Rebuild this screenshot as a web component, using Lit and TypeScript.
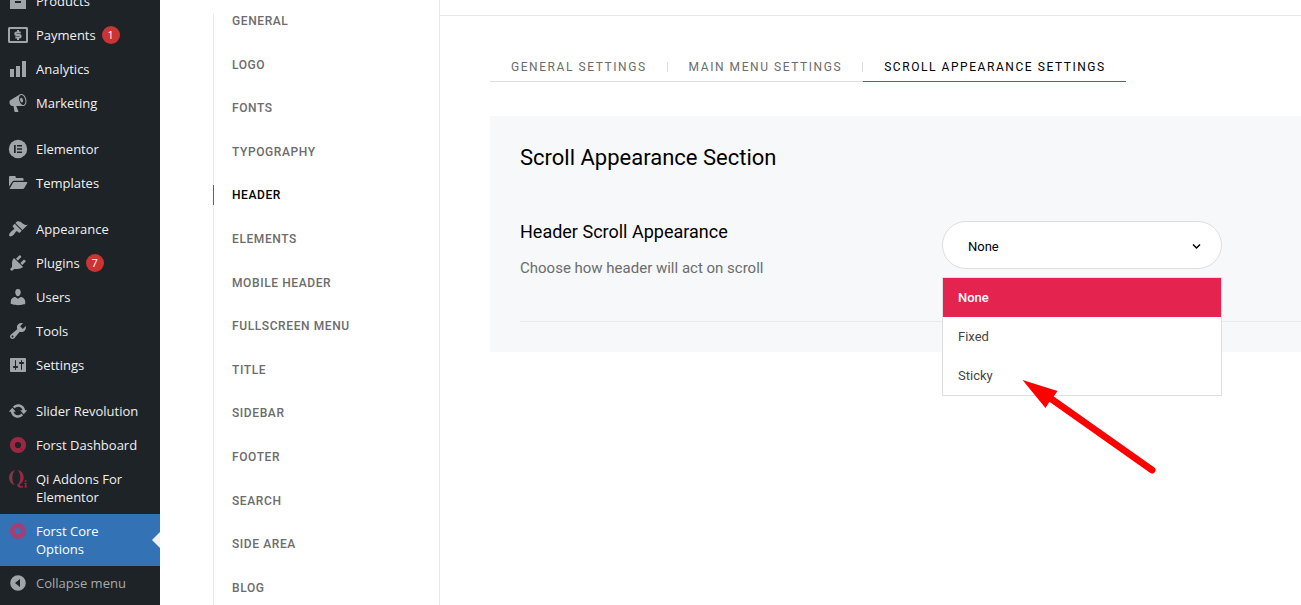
import { LitElement, html, css, svg, nothing } from "lit";
import { customElement, property, state } from "lit/decorators.js";
import { classMap } from "lit/directives/class-map.js";

const icons: Record<string, unknown> = {
  products: svg`<path fill-rule="evenodd" d="M2 4h16v4H2zM2 8h16v10H2zM7 10v2h6v-2z"/>`,
  payments: svg`<path fill-rule="evenodd" d="M1.500 2h17C19.300 2 20 2.700 20 3.500v13c0 .8-.7 1.500-1.500 1.500h-17C.7 18 0 17.300 0 16.500v-13C0 2.700.7 2 1.500 2zM2 4v12h16V4z"/><path fill="none" stroke="currentColor" stroke-width="2" d="M12.700 7.500H8.600c-.8 0-1.300.5-1.300 1.200S7.800 10 8.600 10h2.800c.8 0 1.300.6 1.300 1.300s-.5 1.200-1.300 1.200H7.300M10 5v2.300M10 12.600v2.400"/>`,
  analytics: svg`<path d="M18 18V2h-4v16h4zm-6 0V7H8v11h4zM2 18h4v-8H2v8z"/>`,
  marketing: svg`<path d="M18.15 5.94c.46 1.62.38 3.22-.02 4.48-.42 1.28-1.26 2.18-2.3 2.48-.16.06-.26.06-.4.06-.06.02-.12.02-.18.02-.06.02-.14.02-.22.02h-6.8l2.22 5.5c.02.14-.06.26-.14.34-.08.1-.24.16-.34.16H6.95c-.1 0-.26-.06-.34-.16-.08-.08-.16-.2-.14-.34l-1-5.5H4.25l-.02-.02c-.5.06-1.08-.18-1.54-.62s-.88-1.08-1.06-1.88c-.24-.8-.2-1.56-.02-2.2.18-.62.58-1.08 1.06-1.3l.02-.02 9-5.4c.1-.06.18-.1.24-.16.06-.04.14-.08.24-.12.16-.08.28-.12.5-.18 1.04-.3 2.24.1 3.22.98s1.84 2.24 2.26 3.86zm-2.58 5.98h-.02c.4-.1.74-.34 1.04-.7.58-.7.86-1.76.86-3.04 0-.64-.1-1.3-.28-1.98-.34-1.36-1.02-2.5-1.78-3.24s-1.68-1.1-2.46-.88c-.82.22-1.4.96-1.7 2-.32 1.04-.28 2.36.06 3.72.38 1.36 1 2.5 1.8 3.24.78.74 1.62 1.1 2.48.88zm-2.54-7.08c.22-.04.42-.02.62.04.38.16.76.48 1.02 1s.42 1.2.42 1.78c0 .3-.04.56-.12.8-.18.48-.44.84-.86.94-.34.1-.8-.06-1.14-.4s-.64-.86-.78-1.5c-.18-.62-.12-1.24.02-1.72s.48-.84.82-.94z"/>`,
  elementor: svg`<circle cx="10" cy="10" r="9.200"/><path fill="#1d2327" d="M6 6h1.700v8H6zM9 6h5v1.600H9zM9 9.200h5v1.600H9zM9 12.400h5V14H9z"/>`,
  templates: svg`<path d="M1 13.500V4.300C1 3.500 1.600 3 2.300 3h4.200c.7 0 1.300.5 1.300 1.300V5h6.500c.7 0 1.200.5 1.200 1.200v1.600H6.300c-.9 0-1.700.4-2.200 1.200z"/><path d="M1.500 16l3.300-6c.3-.6.900-.9 1.500-.9h12.400c.5 0 .7.4.5.8l-2.900 5.200c-.3.600-.9.900-1.500.9z"/>`,
  appearance: svg`<path d="M14.48 11.06L7.41 3.99l1.5-1.5c.5-.56 2.3-.47 3.51.32 1.21.8 1.43 1.28 2.91 2.1 1.18.64 2.45 1.26 4.45.85zm-.71.71L6.7 4.7 4.93 6.47c-.39.39-.39 1.02 0 1.41l1.06 1.06c.39.39.39 1.03 0 1.42-.6.6-1.43 1.11-2.21 1.69-.35.26-.7.53-1.01.84C1.43 14.23.4 16.08 1.4 17.07c.99 1 2.84-.03 4.18-1.36.31-.31.58-.66.85-1.02.57-.78 1.08-1.61 1.69-2.21.39-.39 1.02-.39 1.41 0l1.06 1.06c.39.39 1.02.39 1.41 0z"/>`,
  plugins: svg`<path d="M13.11 4.36L9.87 7.6 8 5.73l3.24-3.24c.35-.34 1.05-.2 1.56.32.52.51.66 1.21.31 1.55zm-8 1.77l.91-1.12 9.01 9.01-1.19.84c-.71.71-2.63 1.16-3.82 1.16H6.14L4.9 17.26c-.59.59-1.54.59-2.12 0-.59-.58-.59-1.53 0-2.12l1.24-1.24v-3.88c0-1.13.4-3.19 1.09-3.89zm7.26 3.97l3.24-3.24c.34-.35 1.04-.21 1.55.31.52.51.66 1.21.31 1.55l-3.24 3.25z"/>`,
  users: svg`<path d="M10 9.25c-2.27 0-2.73-3.44-2.73-3.44C7 4.02 7.82 2 9.97 2c2.16 0 2.98 2.02 2.71 3.81 0 0-.41 3.44-2.68 3.44zm0 2.57L12.72 10c2.39 0 4.52 2.33 4.52 4.53v2.49s-3.65 1.13-7.24 1.13c-3.65 0-7.24-1.13-7.24-1.13v-2.49c0-2.25 1.94-4.48 4.47-4.48z"/>`,
  tools: svg`<path d="M16.68 9.77c-1.34 1.34-3.3 1.67-4.95.99l-5.41 6.52c-.99.99-2.59.99-3.58 0s-.99-2.59 0-3.57l6.52-5.42c-.68-1.65-.35-3.61.99-4.95 1.28-1.28 3.12-1.62 4.72-1.06l-2.89 2.89 2.82 2.82 2.86-2.87c.53 1.58.18 3.39-1.08 4.65zM3.81 16.21c.4.39 1.04.39 1.43 0 .4-.4.4-1.04 0-1.43-.39-.4-1.03-.4-1.43 0-.39.39-.39 1.03 0 1.43z"/>`,
  settings: svg`<path d="M18 16V4c0-.55-.45-1-1-1H3c-.55 0-1 .45-1 1v12c0 .55.45 1 1 1h14c.55 0 1-.45 1-1zM8 11h1c.55 0 1 .45 1 1s-.45 1-1 1H8v1.5c0 .28-.22.5-.5.5s-.5-.22-.5-.5V13H6c-.55 0-1-.45-1-1s.45-1 1-1h1V5.5c0-.28.22-.5.5-.5s.5.22.5.5V11zm5-2h-1c-.55 0-1-.45-1-1s.45-1 1-1h1V5.5c0-.28.22-.5.5-.5s.5.22.5.5V7h1c.55 0 1 .45 1 1s-.45 1-1 1h-1v5.5c0 .28-.22.5-.5.5s-.5-.22-.5-.5V9z"/>`,
  update: svg`<path d="M10.2 3.28c3.53 0 6.43 2.61 6.92 6h2.08l-3.5 4-3.5-4h2.32c-.45-1.97-2.21-3.45-4.32-3.45-1.45 0-2.73.71-3.54 1.78L4.95 5.66C6.23 4.2 8.11 3.28 10.2 3.28zm-.4 13.44c-3.52 0-6.43-2.61-6.92-6H.8l3.5-4c1.17 1.33 2.33 2.67 3.5 4H5.48c.45 1.97 2.21 3.45 4.32 3.45 1.45 0 2.73-.71 3.54-1.78l1.71 1.95c-1.28 1.46-3.15 2.38-5.25 2.38z"/>`,
  forst: svg`<circle cx="10" cy="10" r="5.600" fill="none" stroke="#9b2743" stroke-width="5"/><path d="M12.300 12.400l1.800 2.600" stroke="#6d2036" stroke-width="1"/>`,
  forstActive: svg`<circle cx="10" cy="10" r="5.600" fill="none" stroke="#a23f74" stroke-width="5"/><path d="M12.300 12.400l1.800 2.600" stroke="#7a4a88" stroke-width="1"/>`,
  qi: svg`<path fill="#80384b" d="M7.200 1.200C3.500 1.800 1.100 4.700 1.100 8.500s2.300 6.800 5.600 7.500C5 14.500 4.400 12 4.400 8.600c0-3.300.9-5.900 2.800-7.400z"/><path fill="#9b2743" d="M9.300 1.100c3.800.4 6.400 3.400 6.400 7.400 0 3.200-1.500 5.800-4.200 7 .9 1.400 2 2 3.700 1.800v1.200c-3 .8-5.200 0-6.300-2.600 2.300-1.200 3.400-3.600 3.400-7.300 0-3.500-1-6-3-7.500zM16.800 11.300h1.700V13h-1.700zM16.300 14h2.200v3.600h.7v.9h-2.900v-.9h.6v-2.700h-.6z"/>`,
  collapse: svg`<path fill-rule="evenodd" d="M10 2.200a7.800 7.800 0 1 1 0 15.600 7.800 7.800 0 0 1 0-15.600zM12 6l-5 4 5 4z"/>`,
};

interface MenuEntry {
  label: string;
  icon: string;
  badge?: number;
  current?: boolean;
}

const menuGroups: MenuEntry[][] = [
  [
    { label: "Products", icon: "products" },
    { label: "Payments", icon: "payments", badge: 1 },
    { label: "Analytics", icon: "analytics" },
    { label: "Marketing", icon: "marketing" },
  ],
  [
    { label: "Elementor", icon: "elementor" },
    { label: "Templates", icon: "templates" },
  ],
  [
    { label: "Appearance", icon: "appearance" },
    { label: "Plugins", icon: "plugins", badge: 7 },
    { label: "Users", icon: "users" },
    { label: "Tools", icon: "tools" },
    { label: "Settings", icon: "settings" },
  ],
  [
    { label: "Slider Revolution", icon: "update" },
    { label: "Forst Dashboard", icon: "forst" },
    { label: "Qi Addons For Elementor", icon: "qi" },
    { label: "Forst Core Options", icon: "forstActive", current: true },
  ],
];

@customElement("admin-menu")
export class AdminMenu extends LitElement {
  static styles = css`
    :host {
      display: block;
      overflow: hidden;
      background: #1d2327;
      color: #f0f0f1;
      font: 13px/18px "Open Sans", "Noto Sans", sans-serif;
    }
    .menu {
      display: flex;
      flex-direction: column;
      gap: 12px;
      margin-top: -16px;
    }
    .group {
      margin: 0;
      padding: 0;
      list-style: none;
    }
    .entry {
      position: relative;
      box-sizing: border-box;
      display: flex;
      gap: 8px;
      width: 100%;
      padding: 8px 12px 8px 8px;
      border: 0;
      background: none;
      color: inherit;
      font: inherit;
      text-align: left;
      text-decoration: none;
    }
    .current {
      background: #3373b5;
      color: #fff;
    }
    .current::after {
      content: "";
      position: absolute;
      top: 50%;
      right: 0;
      margin-top: -8px;
      border: 8px solid transparent;
      border-left-width: 0;
      border-right-color: #f0f0f1;
    }
    .icon {
      flex: none;
      width: 20px;
      height: 20px;
      margin: -1px 0;
      fill: currentColor;
      color: #a0a5aa;
    }
    .label {
      display: flex;
      gap: 6px;
    }
    .badge {
      width: 18px;
      height: 18px;
      border-radius: 9px;
      background: #cc3333;
      color: #fff;
      font-size: 11px;
      text-align: center;
    }
    .collapse {
      color: #a7aaad;
    }
  `;

  private icon(name: string) {
    return html`<svg class="icon" viewBox="0 0 20 20" aria-hidden="true">${icons[name]}</svg>`;
  }

  render() {
    return html`
      <nav class="menu" aria-label="Main menu">
        ${menuGroups.map(
          (group, i) => html`
            <ul class="group">
              ${group.map(
                (e) => html`<li>
                  <a class=${classMap({ entry: true, current: !!e.current })} href="#">
                    ${this.icon(e.icon)}
                    <span class="label">${e.label}${e.badge ? html`<span class="badge">${e.badge}</span>` : nothing}</span>
                  </a>
                </li>`
              )}
              ${i === menuGroups.length - 1
                ? html`<li><button class="entry collapse" type="button">${this.icon("collapse")}<span class="label">Collapse menu</span></button></li>`
                : nothing}
            </ul>
          `
        )}
      </nav>
    `;
  }
}

const sections = [
  "General", "Logo", "Fonts", "Typography", "Header", "Elements", "Mobile Header",
  "Fullscreen Menu", "Title", "Sidebar", "Footer", "Search", "Side Area", "Blog",
];

@customElement("options-nav")
export class OptionsNav extends LitElement {
  @property() current = "Header";

  static styles = css`
    :host {
      box-sizing: border-box;
      display: flex;
      padding: 14px 0 0 53px;
      border-right: 1px solid #e8e8e8;
      font: 500 12px/14px Roboto, sans-serif;
    }
    nav {
      display: flex;
      flex: 1;
    }
    .list {
      flex: 1;
      display: flex;
      flex-direction: column;
      justify-content: space-between;
      margin: 0;
      padding: 0 0 10px 18px;
      border-left: 1px solid #e8e8e8;
      list-style: none;
    }
    .item {
      position: relative;
      display: flex;
    }
    .link {
      color: #6c6c6c;
      letter-spacing: 0.05em;
      text-transform: uppercase;
      text-decoration: none;
    }
    .active .link {
      color: #000;
    }
    .active::before {
      content: "";
      position: absolute;
      inset: -3px auto -3px -19px;
      width: 1px;
      background: #e22450;
    }
  `;

  render() {
    return html`<nav aria-label="Option sections">
      <ul class="list">
        ${sections.map(
          (s) => html`<li class=${classMap({ item: true, active: s === this.current })}><a class="link" href="#">${s}</a></li>`
        )}
      </ul>
    </nav>`;
  }
}

const choices = ["None", "Fixed", "Sticky"];

@customElement("choice-field")
export class ChoiceField extends LitElement {
  @state() private value = "None";

  static styles = css`
    :host {
      display: grid;
      grid-template-columns: 422px 280px;
      padding-bottom: 44px;
      border-bottom: 1px solid #e8e9eb;
      font-family: Roboto, sans-serif;
    }
    .name {
      display: block;
      color: #000;
      font-size: 18px;
      line-height: 22px;
    }
    .hint {
      margin: 16px 0 0;
      color: #6c6c6c;
      font-size: 15px;
      line-height: 18px;
    }
    .control {
      position: relative;
      height: 48px;
    }
    .select {
      appearance: none;
      box-sizing: border-box;
      width: 100%;
      height: 48px;
      padding: 4px 25px 0;
      border: 1px solid #dedede;
      border-radius: 24px;
      outline: 0;
      background: #fff;
      color: #000;
      font: 13px/20px Roboto, sans-serif;
    }
    .chevron {
      position: absolute;
      top: 22px;
      right: 21px;
      width: 9px;
      height: 7px;
      fill: none;
      stroke: #000;
      stroke-width: 1.5;
      pointer-events: none;
    }
    .options {
      position: absolute;
      z-index: 1;
      top: 56px;
      left: 0;
      right: 0;
      margin: 0;
      padding: 0;
      border: 1px solid #dedede;
      background: #fff;
      color: #444;
      font-size: 13px;
      line-height: 39px;
      list-style: none;
    }
    .option {
      padding: 0 15px;
    }
    .chosen {
      background: #e4234f;
      color: #fff;
      font-weight: 500;
    }
  `;

  render() {
    return html`
      <div>
        <label class="name" for="behaviour">Header Scroll Appearance</label>
        <p class="hint">Choose how header will act on scroll</p>
      </div>
      <div class="control">
        <select class="select" id="behaviour" @change=${(e: Event) => (this.value = (e.target as HTMLSelectElement).value)}>
          ${choices.map((c) => html`<option ?selected=${c === this.value}>${c}</option>`)}
        </select>
        <svg class="chevron" viewBox="0 0 9 7" aria-hidden="true"><path d="M1 1.500l3.500 3.500L8 1.500"/></svg>
        <ul class="options" role="listbox" aria-label="Header Scroll Appearance">
          ${choices.map(
            (c) => html`<li class=${classMap({ option: true, chosen: c === this.value })} role="option"
              aria-selected=${c === this.value} @click=${() => (this.value = c)}>${c}</li>`
          )}
        </ul>
      </div>
    `;
  }
}

const tabs = ["General Settings", "Main Menu Settings", "Scroll Appearance Settings"];

@customElement("app-root")
export class AppRoot extends LitElement {
  @state() private tab = 2;

  static styles = css`
    :host {
      position: relative;
      display: grid;
      grid-template-columns: 160px 280px minmax(0, 1fr);
      height: 100vh;
      overflow: hidden;
      background: #fff;
      font-family: Roboto, sans-serif;
    }
    .topbar {
      height: 15px;
      border-bottom: 1px solid #e8e8e8;
    }
    .content {
      padding: 37px 0 0 50px;
    }
    .tabs {
      display: flex;
      width: max-content;
      margin-bottom: 34px;
    }
    .tab {
      display: flex;
      align-items: center;
      padding: 0;
      border: 0;
      border-bottom: 1px solid #dedede;
      background: none;
      color: #6c6c6c;
      font: 12px/28px Roboto, sans-serif;
      letter-spacing: 0.13em;
      text-transform: uppercase;
    }
    .caption {
      padding: 0 20px 0 21px;
    }
    .tab:not(:last-child)::after {
      content: "";
      width: 1px;
      height: 10px;
      background: #dedede;
    }
    .selected {
      border-color: #e22450;
      color: #000;
    }
    .panel {
      padding: 30px 0 30px 30px;
      background: #f7f8fa;
    }
    .title {
      margin: 0 0 51px;
      color: #000;
      font-size: 22px;
      font-weight: 400;
      line-height: 24px;
    }
    .pointer {
      position: absolute;
      z-index: 2;
      top: 376px;
      left: 1018px;
      width: 144px;
      height: 102px;
      pointer-events: none;
    }
  `;

  render() {
    return html`
      <admin-menu></admin-menu>
      <options-nav></options-nav>
      <main>
        <div class="topbar"></div>
        <div class="content">
          <div class="tabs" role="tablist">
            ${tabs.map(
              (t, i) => html`<button type="button" role="tab" aria-selected=${i === this.tab}
                class=${classMap({ tab: true, selected: i === this.tab })}
                @click=${() => (this.tab = i)}><span class="caption">${t}</span></button>`
            )}
          </div>
          <section class="panel">
            <h2 class="title">Scroll Appearance Section</h2>
            <choice-field></choice-field>
          </section>
        </div>
      </main>
      <svg class="pointer" viewBox="0 0 144 102" aria-hidden="true">
        <path d="M32 22L134 94" stroke="#f00" stroke-width="7" stroke-linecap="round"/>
        <path d="M4.500 4L39.500 15 35 21.500l-4 5L27.500 32z" fill="#f00"/>
      </svg>
    `;
  }
}
